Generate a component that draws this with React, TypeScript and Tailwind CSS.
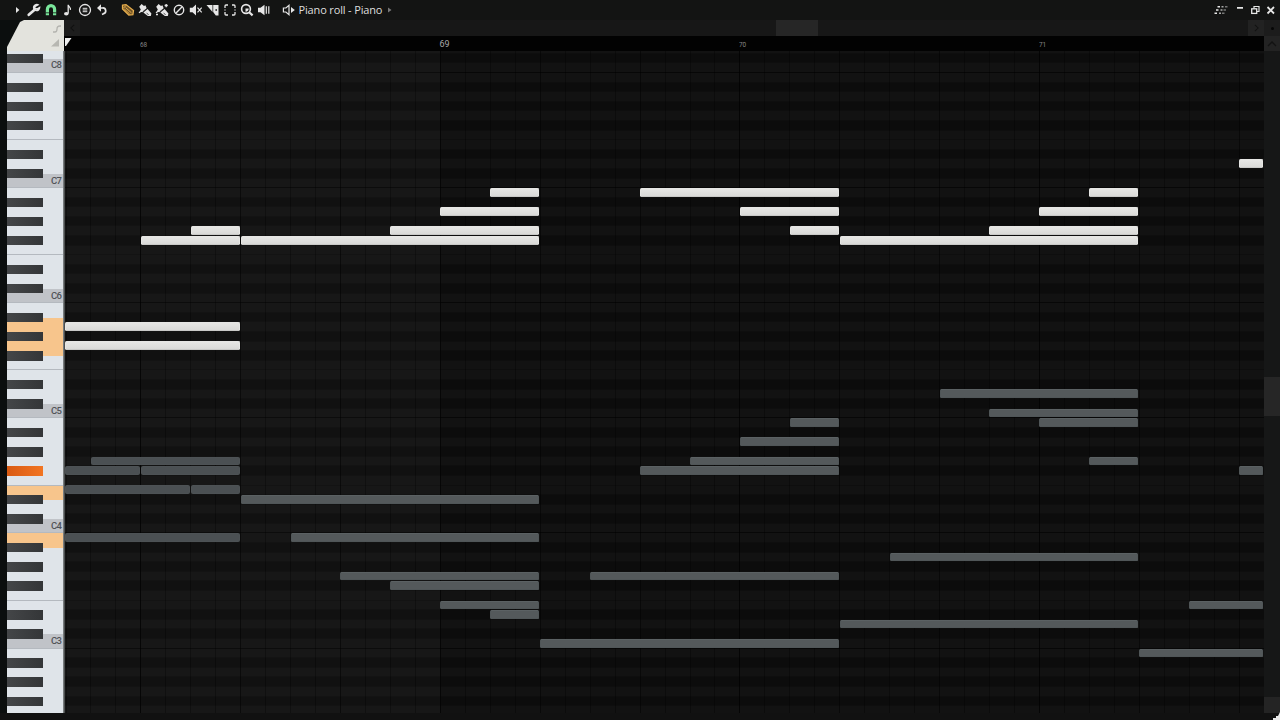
import type { ReactNode } from 'react'

const ROW = 9.594
const STEP = 24.96
const TOP_KEY = 110
const BOTTOM_KEY = 41
const GRID_LEFT = 64
const GRID_TOP = 51
const BLACK = [1, 3, 6, 8, 10]

const keys = Array.from({ length: TOP_KEY - BOTTOM_KEY + 1 }, (_, i) => TOP_KEY - i)
const isBlack = (key: number) => BLACK.includes(key % 12)

// y of a key's row, relative to the top of the grid
const rowY = (key: number) => 178.5 + (96 - key) * ROW - GRID_TOP
// x of a step, counted from bar 68
const stepX = (step: number) => 140.4 + step * STEP - GRID_LEFT

interface Note {
  key: number
  from: number
  to: number
  ghost?: boolean
}

const notes: Note[] = [
  { key: 81, from: -3.02, to: 4 },
  { key: 79, from: -3.02, to: 4 },
  { key: 91, from: 2, to: 4 },
  { key: 90, from: 0, to: 4 },
  { key: 90, from: 4, to: 16 },
  { key: 91, from: 10, to: 16 },
  { key: 93, from: 12, to: 16 },
  { key: 95, from: 14, to: 16 },
  { key: 95, from: 20, to: 28 },
  { key: 93, from: 24, to: 28 },
  { key: 91, from: 26, to: 28 },
  { key: 90, from: 28, to: 40 },
  { key: 91, from: 34, to: 40 },
  { key: 93, from: 36, to: 40 },
  { key: 95, from: 38, to: 40 },
  { key: 98, from: 44, to: 45 },
  { key: 67, from: -2, to: 4, ghost: true },
  { key: 66, from: -3.02, to: 0, ghost: true },
  { key: 66, from: 0, to: 4, ghost: true },
  { key: 64, from: -3.02, to: 2, ghost: true },
  { key: 64, from: 2, to: 4, ghost: true },
  { key: 59, from: -3.02, to: 4, ghost: true },
  { key: 63, from: 4, to: 16, ghost: true },
  { key: 59, from: 6, to: 16, ghost: true },
  { key: 55, from: 8, to: 16, ghost: true },
  { key: 54, from: 10, to: 16, ghost: true },
  { key: 52, from: 12, to: 16, ghost: true },
  { key: 51, from: 14, to: 16, ghost: true },
  { key: 48, from: 16, to: 28, ghost: true },
  { key: 55, from: 18, to: 28, ghost: true },
  { key: 66, from: 20, to: 28, ghost: true },
  { key: 67, from: 22, to: 28, ghost: true },
  { key: 69, from: 24, to: 28, ghost: true },
  { key: 71, from: 26, to: 28, ghost: true },
  { key: 50, from: 28, to: 40, ghost: true },
  { key: 57, from: 30, to: 40, ghost: true },
  { key: 74, from: 32, to: 40, ghost: true },
  { key: 72, from: 34, to: 40, ghost: true },
  { key: 71, from: 36, to: 40, ghost: true },
  { key: 67, from: 38, to: 40, ghost: true },
  { key: 47, from: 40, to: 45, ghost: true },
  { key: 52, from: 42, to: 45, ghost: true },
  { key: 66, from: 44, to: 45, ghost: true },
]

const pressed = [81, 79, 66, 64, 59]

function Icon({ children, className = 'text-[#e6e6e6]' }: { children: ReactNode; className?: string }) {
  return (
    <span className={`flex w-[16.95px] shrink-0 justify-center ${className}`}>
      <svg width="14" height="14" viewBox="0 0 14 14" fill="none" stroke="currentColor" strokeWidth="1.4" className="shrink-0">
        {children}
      </svg>
    </span>
  )
}

function BrushIcon({ dots }: { dots?: boolean }) {
  return (
    <Icon>
      <path d="M1.2 3.8 3.600 1 6 3l1.400-.8 1.400 3.200-4.600 3.800-2.400-.8 1-1.800z" fill="currentColor" stroke="none" />
      <path d="M5.400 9.400 9.600 6l3.800 4.400-.6 2.600h-3z" fill="currentColor" stroke="none" />
      <path d="M4.800 8.700 9.200 5.100" stroke="#222" strokeWidth=".7" />
      <path d="m8.600 9.800 2 2.200" stroke="#333" strokeWidth=".8" />
      <path d="M1 9.800 3.400 8" strokeWidth="1.300" />
      {dots && <path d="M9.600 2.500h3.200M11.200 1v3.200M1 11.500h2" strokeWidth="1.300" />}
    </Icon>
  )
}

function TitleBar() {
  return (
    <header className="flex h-5 shrink-0 items-center bg-[#131413] pl-[9px]">
      <Icon><path d="M6 4v6L9.400 7z" fill="currentColor" stroke="none" /></Icon>
      <Icon>
        <path d="M1.800 11.800 7 7.300" strokeWidth="2.700" strokeLinecap="round" />
        <path d="M10.800 1.800A3 3 0 1 0 12.600 4.600L10.300 6 8 5.600 7.800 3.600z" strokeWidth="1.500" />
      </Icon>
      <Icon className="text-[#7ae69b]">
        <path d="M3.400 12.200V6.300a3.600 3.600 0 0 1 7.200 0v5.900" strokeWidth="3.200" />
        <path d="M1.500 9.800h4M8.500 9.800h4" stroke="#131413" strokeWidth=".8" />
      </Icon>
      <Icon>
        <path d="M7.200 10.600V1.800c.3 2.200 2.900 2.300 2.200 5" strokeWidth="1.300" />
        <ellipse cx="5.300" cy="10.800" rx="2.300" ry="1.800" fill="currentColor" stroke="none" />
      </Icon>
      <Icon>
        <circle cx="7" cy="7" r="5.500" strokeWidth="1.300" />
        <path d="M4.700 5.300h4.600M4.700 7h4.600M4.700 8.700h4.600" strokeWidth="1" />
      </Icon>
      <Icon>
        <path d="M4 5h3.500a2.900 2.900 0 0 1 1 5.700l-1.500.8" strokeWidth="1.700" />
        <path d="M6 1.300v7.400L2 5z" fill="currentColor" stroke="none" />
      </Icon>
      <div className="ml-[9px] flex">
        <Icon className="text-[#e5ad4c]">
          <path d="M1.500 2.200 5 1.600l7.500 6-.6 4-4.100.4-6.300-6z" strokeWidth="1.300" fill="#6f5326" />
          <path d="m2 5.500 3-3M4.600 4.600l5.900 5.300M3.300 6l5.300 4.900" strokeWidth="1" />
        </Icon>
        <BrushIcon />
        <BrushIcon dots />
        <Icon>
          <circle cx="7" cy="7" r="4.700" />
          <path d="m3.800 10.200 6.400-6.400" />
        </Icon>
        <Icon>
          <path d="M.8 4.800h2.700L7 1.600v10.800L3.500 9.200H.8z" fill="currentColor" stroke="none" />
          <path d="m8.500 4.700 4.200 4.600M12.700 4.700 8.500 9.300" strokeWidth="1.200" />
        </Icon>
        <Icon>
          <path d="M.5 2h6v7zM7.200 2h5.300v10.500h-2.700L7.200 9z" fill="currentColor" stroke="none" />
          <circle cx="10.200" cy="7" r=".9" fill="#333" stroke="none" />
        </Icon>
        <Icon>
          <path d="M2 5V3q0-1 1-1h2M9 2h2q1 0 1 1v2M12 9v2q0 1-1 1H9M5 12H3q-1 0-1-1V9M2 6.500v1M12 6.500v1" strokeWidth="1.300" />
        </Icon>
        <Icon>
          <circle cx="6" cy="6" r="4.400" strokeWidth="1.600" />
          <path d="m9.200 9.200 3.400 3.200" strokeWidth="2.200" />
          <path d="M5.500 5.500h3.200A3 3 0 0 1 5.500 8.700z" fill="currentColor" stroke="none" />
        </Icon>
        <Icon>
          <path d="M1 4.800h2.500L7.500 1.800v10.400L3.500 9.200H1z" fill="currentColor" stroke="none" />
          <path d="M9.300 3.300v7.400M11.800 3.300v7.400" strokeWidth="1.200" />
        </Icon>
      </div>
      <div className="ml-[8px] flex items-center">
        <Icon>
          <path d="M1.400 5h2.500L7 2.300v9.400L3.900 9H1.400z" strokeWidth="1.200" />
          <path d="M9 4v6l3.800-3z" fill="currentColor" stroke="none" />
        </Icon>
        <h1 className="ml-[1.500px] w-[88px] whitespace-nowrap pb-px font-['Open_Sans','Noto_Sans',sans-serif] text-[11px] font-medium leading-[19px] tracking-[-0.150px] text-[#dedede]">
          Piano roll - Piano
        </h1>
        <svg width="6" height="8" viewBox="0 0 6 8">
          <path d="M1 1.500v5L4.500 4z" fill="#777" />
        </svg>
      </div>
      <div className="ml-auto mr-[2px] flex items-center text-[#e6e6e6]">
        <svg width="16" height="12" viewBox="0 0 16 12" fill="none" stroke="currentColor" strokeWidth="1.600" className="mr-[5px]">
          <path d="M4.500 2.800h2.500M3 6h2.500M1.500 9.200H4" />
          <path d="M8.500 2.800h2M7.500 6h2M6 9.200h2" stroke="#aaa" />
          <path d="M12 2.800h2.500M10.500 6H13M9 9.200h2.500" stroke="#777" />
        </svg>
        <svg width="44" height="12" viewBox="0 0 44 12" fill="none" stroke="currentColor" className="translate-x-[1.500px]">
          <path d="M1.500 3.800h6" strokeWidth="1.800" />
          <path d="M18.500 4.500V2.500h5v5h-2" strokeWidth="1.200" />
          <rect x="16.200" y="4.800" width="5" height="4.600" strokeWidth="1.300" />
          <path d="m32 3 6.500 6.500M38.500 3 32 9.500" strokeWidth="1.800" />
        </svg>
      </div>
    </header>
  )
}

function Corner() {
  return (
    <div className="relative h-8 w-[57px] shrink-0">
      <div className="h-[31px] bg-[#e3e3dd] [clip-path:polygon(17px_0,100%_0,100%_100%,0_100%,0_27px,13px_2px)]" />
      <svg width="16" height="30" viewBox="0 0 16 30" className="absolute right-0 top-0">
        <path d="M5 12h2q2 0 2-3t3-3h1" fill="none" stroke="#b4b4af" strokeWidth="1.300" />
        <path d="M3 26.500 11 19v7.500z" fill="#b7b7b1" />
      </svg>
    </div>
  )
}

function Ruler() {
  return (
    <div className="relative h-[15px] overflow-hidden bg-[#020202] font-['Roboto',sans-serif] text-[8px] leading-[15px] text-[#858585]">
      <svg width="8" height="9" viewBox="0 0 8 9" className="absolute left-px top-[2px]">
        <path d="M0 0h6.500L1 8H0z" fill="#ededed" />
      </svg>
      {[68, 69, 70, 71].map((bar, i) => (
        <span
          key={bar}
          className={`absolute top-px origin-left ${bar === 69 ? 'text-[9px] text-[#a8a8a8]' : 'scale-x-[0.800]'}`}
          style={{ left: stepX(i * 12) - 0.4 }}
        >
          {bar}
        </span>
      ))}
    </div>
  )
}

function PianoKey({ pitch }: { pitch: number }) {
  const black = isBlack(pitch)
  const on = pressed.includes(pitch)
  const note = pitch % 12
  // white keys widen behind the neighbouring black keys
  const up = isBlack(pitch + 1) ? ROW / 2 : 0
  const down = isBlack(pitch - 1) ? ROW / 2 : 0

  if (black) {
    return (
      <div className="relative z-10 shrink-0" style={{ height: ROW }}>
        <div
          className={`h-[9.400px] w-9 ${on ? 'bg-linear-to-r from-[#d95a12] to-[#f27522]' : 'bg-linear-to-r from-[#444648] to-[#343638]'}`}
        />
      </div>
    )
  }

  return (
    <div className="relative shrink-0" style={{ height: ROW }}>
      {(on || note === 0) && (
        <div
          className={`absolute inset-x-0 ${on ? 'bg-[#f7c58c]' : 'bg-[#c0c3c8]'}`}
          style={{ top: -up, bottom: -down }}
        />
      )}
      {(note === 0 || note === 5) && <div className="absolute inset-x-0 bottom-0 h-px bg-[#b4b9bf]" />}
      {note === 0 && (
        <span className="absolute right-[1.500px] top-[-4px] font-['Roboto',sans-serif] text-[9.500px] font-medium leading-[12px] tracking-[-0.500px] text-[#505358]">
          C{pitch / 12 - 1}
        </span>
      )}
    </div>
  )
}

function Keyboard() {
  return (
    <div className="h-[662px] w-[57px] shrink-0 overflow-hidden border-r border-[#777b7d] bg-[#dfe4e9]">
      <div className="flex flex-col" style={{ marginTop: rowY(TOP_KEY) }}>
        {keys.map((pitch) => (
          <PianoKey key={pitch} pitch={pitch} />
        ))}
      </div>
    </div>
  )
}

function NoteGrid() {
  const steps = Array.from({ length: 48 }, (_, i) => i - 3)
  return (
    <div className="relative h-[662px] overflow-hidden border-l border-[#4b4e4e] bg-[#121212]">
      <div className="flex flex-col" style={{ marginTop: rowY(TOP_KEY) }}>
        {keys.map((pitch) => (
          <div
            key={pitch}
            className={`shrink-0 border-b ${pitch % 12 === 0 ? 'border-[#070707]' : 'border-[#0e0e0e]'} ${isBlack(pitch) ? 'bg-[#0c0c0c]' : 'bg-[#121212]'}`}
            style={{ height: ROW }}
          />
        ))}
      </div>
      {/* bars of the previous group are tinted lighter */}
      <div className="absolute inset-y-0 left-0 bg-white/[0.022]" style={{ width: stepX(12) }} />
      {steps.map((s) => (
        <div
          key={s}
          className={`absolute inset-y-0 w-px ${s % 12 === 0 ? 'bg-black/70' : s % 4 === 0 ? 'bg-black/50' : 'bg-black/30'}`}
          style={{ left: stepX(s) - 1 }}
        />
      ))}
      {notes.map((n) => (
        <div
          key={`${n.key}-${n.from}`}
          className={`absolute h-[8.600px] rounded-[1.500px] border ${
            n.ghost
              ? n.from < 4
                ? 'border-[#4d5255] bg-[#4b5053]'
                : 'border-[#505658] border-t-[#5b6163] bg-[#54595b]'
              : 'border-[#e6e6e4] border-b-[#c9c9c7] bg-linear-to-b from-[#e6e6e4] to-[#dadad8]'
          }`}
          style={{
            left: stepX(n.from) - 0.6,
            top: rowY(n.key) - 0.1,
            width: (n.to - n.from) * STEP - 0.8,
          }}
        />
      ))}
    </div>
  )
}

function VerticalScroll() {
  return (
    <aside className="flex w-4 shrink-0 flex-col bg-[#161717]">
      <div className="flex h-4 items-center justify-center bg-[#1c1c1c]">
        <span className="size-[3px] rounded-full bg-[#060606]" />
      </div>
      <div className="flex h-[15px] items-center justify-center bg-[#232323]">
        <svg width="10" height="6" viewBox="0 0 10 6" fill="none" stroke="#121212">
          <path d="m1 5 4-4 4 4" strokeWidth="1.300" />
        </svg>
      </div>
      <div className="mt-[326px] h-[39px] bg-[#262626]" />
      <div className="mt-[281px] h-4 bg-[#242424]" />
    </aside>
  )
}

export default function App() {
  return (
    <div className="relative flex h-[720px] w-[1280px] flex-col overflow-hidden bg-[#111111]">
      <TitleBar />
      <div className="flex h-[693px] shrink-0">
        <div className="flex w-16 shrink-0 flex-col bg-[#0b0e0e] pl-[7px]">
          <div className="h-[31px]">
            <Corner />
          </div>
          <Keyboard />
        </div>
        <main className="w-[1200px]">
          <div className="flex h-4 items-center bg-[#171717]">
            <div className="flex size-4 items-center justify-center bg-[#1d1d1d]">
              <svg width="5" height="8" viewBox="0 0 6 10" fill="none" stroke="#101010">
                <path d="M5 1 1 5l4 4" strokeWidth="1.300" />
              </svg>
            </div>
            <div className="ml-[696px] h-4 w-[42px] bg-[#262626]" />
            <div className="ml-auto flex size-4 items-center justify-center bg-[#222222]">
              <svg width="5" height="8" viewBox="0 0 6 10" fill="none" stroke="#121212">
                <path d="m1 1 4 4-4 4" strokeWidth="1.300" />
              </svg>
            </div>
          </div>
          <Ruler />
          <NoteGrid />
        </main>
        <VerticalScroll />
      </div>
      <svg width="8" height="8" viewBox="0 0 8 8" className="absolute bottom-0 right-0">
        <path d="M8 0v8H1V6h3V4h2z" fill="#e8e8e8" />
      </svg>
    </div>
  )
}
